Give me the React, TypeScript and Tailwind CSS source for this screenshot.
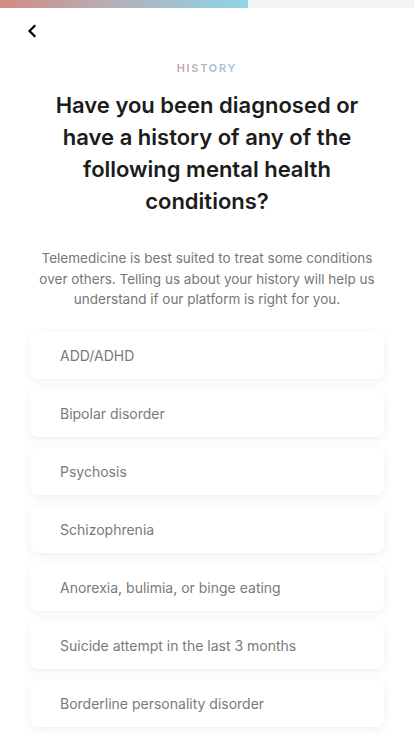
const conditions = [
  "ADD/ADHD",
  "Bipolar disorder",
  "Psychosis",
  "Schizophrenia",
  "Anorexia, bulimia, or binge eating",
  "Suicide attempt in the last 3 months",
  "Borderline personality disorder",
];

function BackButton() {
  return (
    <button className="flex h-6 w-6 items-center justify-center text-black">
      <svg width="10" height="14" viewBox="0 0 10 14" fill="none">
        <path d="M7.5 2 L2.5 7 L7.5 12" stroke="currentColor" strokeWidth="2.2" strokeLinecap="square" />
      </svg>
    </button>
  );
}

function ConditionOption({ label }: { label: string }) {
  return (
    <button className="flex h-[47px] w-full items-center rounded-lg bg-white px-[30px] text-left text-[14px] text-[#7a7a7a] shadow-[0_2px_10px_rgba(0,0,0,0.07)]">
      {label}
    </button>
  );
}

export default function App() {
  return (
    <div className="h-[736px] overflow-hidden bg-white font-['Inter',sans-serif]">
      <div className="flex h-2 w-full bg-[#f4f4f4]">
        <div className="h-full w-[248px] bg-[linear-gradient(90deg,#d58a83,#b3b0b6_45%,#8fd4ea)]" />
      </div>
      <div className="px-5 pt-[11px]">
        <BackButton />
      </div>
      <div className="flex flex-col items-center px-[30px] pt-[17px]">
        <span className="block bg-[linear-gradient(90deg,#cfa3a6,#9fcfdc)] bg-clip-text text-[11px] leading-4 font-bold tracking-[0.15em] text-transparent">
          HISTORY
        </span>
        <h1 className="mt-[13px] max-w-[330px] text-center text-[22px] leading-[32px] font-semibold text-[#1c1c1c]">
          Have you been diagnosed or have a history of any of the following mental health conditions?
        </h1>
        <p className="mt-[31px] text-center text-[13.5px] leading-[20.5px] text-[#777]">
          Telemedicine is best suited to treat some conditions over others. Telling us about your history will help us
          understand if our platform is right for you.
        </p>
        <div className="mt-[22px] flex w-full flex-col gap-[11px]">
          {conditions.map((c) => (
            <ConditionOption key={c} label={c} />
          ))}
        </div>
      </div>
    </div>
  );
}
